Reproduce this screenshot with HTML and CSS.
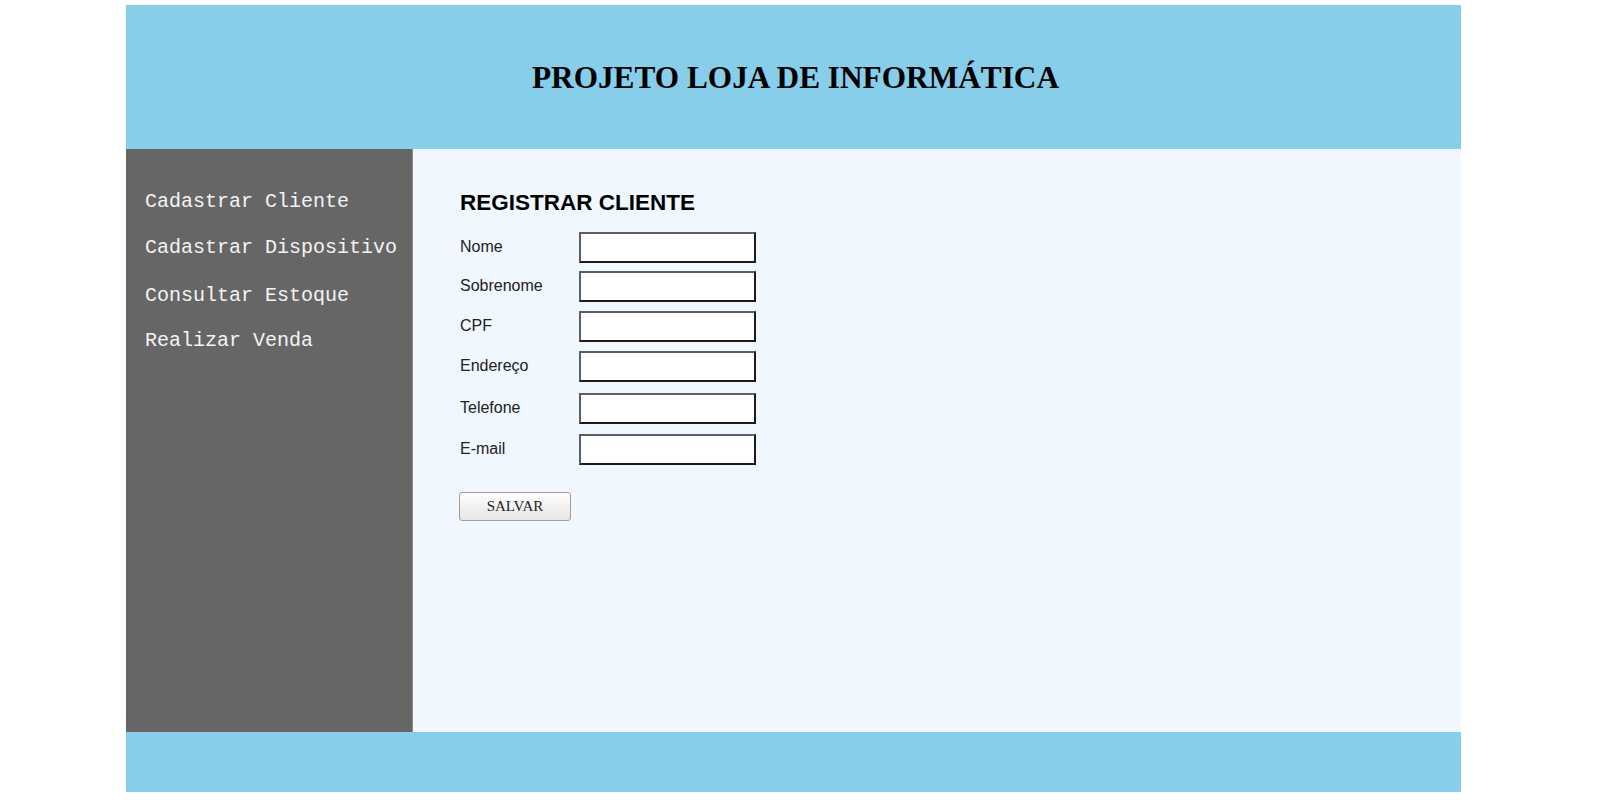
FILE: index.html
```html
<!DOCTYPE html>
<html lang="pt-BR">
<head>
<meta charset="utf-8">
<title>Projeto Loja de Informática</title>
<link rel="stylesheet" href="styles.css">
</head>
<body>
<div class="page">
  <header class="header">
    <h1 class="title">PROJETO LOJA DE INFORMÁTICA</h1>
  </header>
  <div class="main">
    <nav class="sidebar">
      <a class="nav-link nav-link--first" href="#">Cadastrar Cliente</a>
      <a class="nav-link nav-link--wide" href="#">Cadastrar Dispositivo</a>
      <a class="nav-link" href="#">Consultar Estoque</a>
      <a class="nav-link" href="#">Realizar Venda</a>
    </nav>
    <section class="content">
      <h2 class="form-title">REGISTRAR CLIENTE</h2>
      <form class="form">
        <div class="row row--tight"><label class="label">Nome</label><input class="field" type="text"></div>
        <div class="row"><label class="label">Sobrenome</label><input class="field" type="text"></div>
        <div class="row"><label class="label">CPF</label><input class="field" type="text"></div>
        <div class="row row--wide"><label class="label">Endereço</label><input class="field" type="text"></div>
        <div class="row row--mid"><label class="label">Telefone</label><input class="field" type="text"></div>
        <div class="row"><label class="label">E-mail</label><input class="field" type="text"></div>
        <button class="btn" type="button">SALVAR</button>
      </form>
    </section>
  </div>
  <footer class="footer"></footer>
</div>
</body>
</html>
```
FILE: styles.css
```css
* { box-sizing: border-box; }
body {
  margin: 0;
  background: #ffffff;
}
.page {
  width: 1335px;
  margin: 5px 0 0 126px;
}
.header {
  height: 144px;
  background: #87ceeb;
  padding-top: 55px;
}
.title {
  margin: 0;
  padding-left: 4px;
  text-align: center;
  font-family: "Liberation Serif", "Times New Roman", serif;
  font-weight: bold;
  font-size: 31.3px;
  line-height: 36px;
  color: #000;
}
.main {
  display: flex;
  height: 583px;
}
.sidebar {
  width: 287px;
  flex: none;
  background: #666666;
  border-right: 1px solid #8a8a8a;
  padding: 41px 0 0 19px;
  display: flex;
  flex-direction: column;
}
.nav-link {
  font-family: "Liberation Mono", "Courier New", monospace;
  font-size: 20px;
  line-height: 24px;
  color: #f4f4f4;
  text-decoration: none;
  margin-bottom: 21px;
  white-space: nowrap;
}
.nav-link--first { margin-bottom: 22px; }
.nav-link--wide { margin-bottom: 24px; }
.content {
  flex: 1;
  background: #f0f7ff;
  padding: 41px 0 0 47px;
}
.form-title {
  margin: 0 0 16px 0;
  font-family: "Liberation Sans", Arial, sans-serif;
  font-weight: bold;
  font-size: 22.5px;
  line-height: 26px;
  color: #000;
}
.form {
  display: flex;
  flex-direction: column;
  align-items: flex-start;
}
.row {
  display: flex;
  align-items: center;
  height: 31px;
  margin-bottom: 9px;
}
.row--tight { margin-bottom: 8px; }
.row--wide { margin-bottom: 11px; }
.row--mid { margin-bottom: 10px; }
.label {
  width: 119px;
  padding-bottom: 1px;
  font-family: "Liberation Sans", Arial, sans-serif;
  font-size: 16px;
  color: #222;
}
.field {
  width: 177px;
  height: 31px;
  margin: 0;
  background: #fff;
  border-style: solid;
  border-width: 2px;
  border-color: #5a5f66 #1a1a1a #1a1a1a #5a5f66;
  border-radius: 0;
  padding: 2px 4px;
  font-family: "Liberation Sans", Arial, sans-serif;
  font-size: 14px;
}
.btn {
  margin-top: 18px;
  margin-left: -1px;
  width: 112px;
  height: 29px;
  padding: 0;
  font-family: "Liberation Serif", "Times New Roman", serif;
  font-size: 15px;
  color: #222;
  background: linear-gradient(#fefefe, #e6e6e6);
  border: 1px solid #a59e8f;
  border-radius: 3px;
}
.footer {
  height: 60px;
  background: #87ceeb;
}
```
